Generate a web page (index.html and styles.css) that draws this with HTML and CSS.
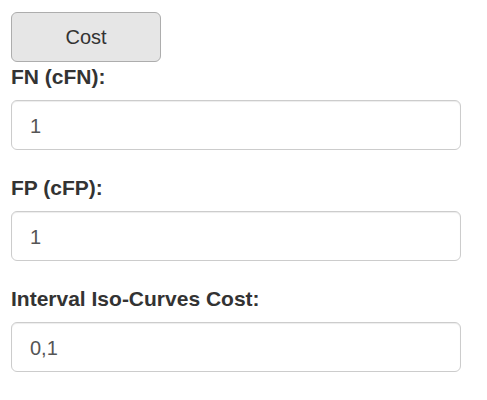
FILE: index.html
```html
<!DOCTYPE html>
<html>
<head>
<meta charset="utf-8">
<link rel="stylesheet" href="styles.css">
</head>
<body>
<div class="panel">
  <button class="btn" type="button">Cost</button>
  <div class="form-group">
    <label class="label" for="fn">FN (cFN):</label>
    <input class="input" id="fn" type="text" value="1">
  </div>
  <div class="form-group">
    <label class="label" for="fp">FP (cFP):</label>
    <input class="input" id="fp" type="text" value="1">
  </div>
  <div class="form-group">
    <label class="label" for="iso">Interval Iso-Curves Cost:</label>
    <input class="input" id="iso" type="text" value="0,1">
  </div>
</div>
</body>
</html>
```
FILE: styles.css
```css
html, body {
  margin: 0;
  padding: 0;
  background: #fff;
}
body {
  font-family: "Liberation Sans", Arial, sans-serif;
  font-size: 20px;
  color: #333;
}
.panel {
  padding: 12px 11px;
  width: 450px;
  display: flex;
  flex-direction: column;
  align-items: flex-start;
}
.btn {
  width: 150px;
  height: 50px;
  box-sizing: border-box;
  background: #e6e6e6;
  border: 1px solid #adadad;
  border-radius: 6px;
  font-family: inherit;
  font-size: 20px;
  color: #333;
  padding: 0;
  margin: 0;
}
.form-group {
  display: flex;
  flex-direction: column;
  width: 450px;
}
.form-group + .form-group {
  margin-top: 23px;
}
.label {
  font-weight: bold;
  font-size: 21px;
  line-height: 29px;
  height: 29px;
  margin-bottom: 9px;
}
.input {
  box-sizing: border-box;
  width: 450px;
  height: 50px;
  margin: 0;
  border: 1px solid #ccc;
  border-radius: 6px;
  box-shadow: inset 0 1px 1px rgba(0,0,0,0.075);
  padding: 3px 18px 0;
  font-family: inherit;
  font-size: 20px;
  color: #555;
  background: #fff;
  outline: none;
}
```
